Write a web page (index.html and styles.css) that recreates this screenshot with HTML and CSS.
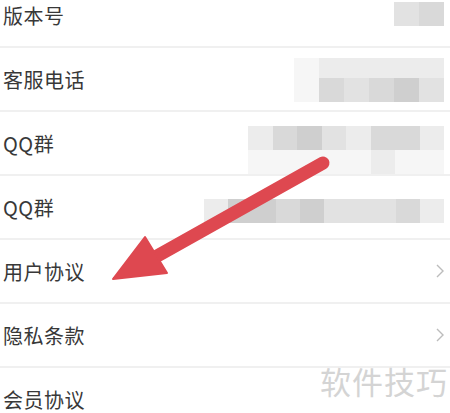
FILE: index.html
```html
<!DOCTYPE html>
<html>
<head>
  <meta charset="utf-8">
  <title>关于</title>
  <link rel="stylesheet" href="styles.css">
</head>
<body>
  <div class="screen">
    <div class="list">
      <div class="row">
        <span class="label">版本号</span>
        <div class="mosaic v1">
          <div class="strip"><i class="m2"></i><i class="m3"></i></div>
        </div>
      </div>
      <div class="row">
        <span class="label">客服电话</span>
        <div class="mosaic v2">
          <div class="strip thin"><i class="m0"></i><i class="m1"></i><i class="m1"></i><i class="m1"></i><i class="m1"></i><i class="m1"></i></div>
          <div class="strip"><i class="m0"></i><i class="m3"></i><i class="m2"></i><i class="m3"></i><i class="m4"></i><i class="m2"></i></div>
        </div>
      </div>
      <div class="row">
        <span class="label">QQ群</span>
        <div class="mosaic v3">
          <div class="strip"><i class="m1"></i><i class="m3"></i><i class="m4"></i><i class="m2"></i><i class="m1"></i><i class="m3"></i><i class="m3"></i><i class="m1"></i></div>
          <div class="strip"><i class="m0"></i><i class="m0"></i><i class="m0"></i><i class="m0"></i><i class="m0"></i><i class="m1"></i><i class="m0"></i><i class="m0"></i></div>
        </div>
      </div>
      <div class="row">
        <span class="label">QQ群</span>
        <div class="mosaic v4">
          <div class="strip"><i class="m1"></i><i class="m4"></i><i class="m4"></i><i class="m3"></i><i class="m4"></i><i class="m2"></i><i class="m2"></i><i class="m2"></i><i class="m3"></i><i class="m1"></i></div>
        </div>
      </div>
      <div class="row">
        <span class="label">用户协议</span>
        <svg class="chevron" viewBox="0 0 8 14"><path d="M1 1 L7 7 L1 13" /></svg>
      </div>
      <div class="row">
        <span class="label">隐私条款</span>
        <svg class="chevron" viewBox="0 0 8 14"><path d="M1 1 L7 7 L1 13" /></svg>
      </div>
      <div class="row">
        <span class="label">会员协议</span>
      </div>
    </div>

    <!-- red annotation arrow -->
    <svg class="arrow" width="450" height="413" viewBox="0 0 450 413">
      <line x1="323" y1="163" x2="150" y2="260" />
      <polygon points="113,279 145,237 167,273" />
    </svg>

    <div class="watermark">软件技巧</div>
  </div>
</body>
</html>
```

FILE: styles.css
```css
html, body {
  margin: 0;
  padding: 0;
  background: #fff;
}

.screen {
  position: relative;
  width: 450px;
  height: 413px;
  overflow: hidden;
  font-family: "Noto Sans CJK SC", "Noto Sans", sans-serif;
}

.list {
  margin-top: -16px;
}

.row {
  height: 62px;
  display: flex;
  align-items: center;
  padding: 0 6px 0 3px;
  border-bottom: 2px solid #f0f0f0;
}

.label {
  font-size: 20px;
  color: #383838;
  letter-spacing: 0.5px;
}

.chevron {
  margin-left: auto;
  width: 8px;
  height: 14px;
  fill: none;
  stroke: #bcbcbc;
  stroke-width: 1.4;
}

/* pixelated (censored) values */
.mosaic {
  margin-left: auto;
  display: flex;
  flex-direction: column;
  filter: blur(0.6px);
}

.strip {
  display: flex;
  height: 24px;
}

.strip.thin {
  height: 20px;
}

.strip i {
  display: block;
  width: 25px;
}

.m0 { background: #f6f6f6; }
.m1 { background: #ececec; }
.m2 { background: #e2e2e2; }
.m3 { background: #d9d9d9; }
.m4 { background: #cfcfcf; }

.v1 {
  margin-top: -2px;
}

.v2 {
  margin-top: 2px;
}

.v3 {
  margin-top: 14px;
}

.v3 .strip i {
  width: 24.5px;
}

.v4 {
  margin-top: 8px;
}

.v4 .strip i {
  width: 24px;
}

.arrow {
  position: absolute;
  left: 0;
  top: 0;
}

.arrow line {
  stroke: #de4850;
  stroke-width: 13;
  stroke-linecap: round;
}

.arrow polygon {
  fill: #de4850;
  stroke: #de4850;
  stroke-width: 2;
  stroke-linejoin: round;
}

.watermark {
  position: absolute;
  left: 320px;
  top: 358px;
  font-size: 31px;
  color: #d4d4d4;
  letter-spacing: 1px;
}
```
